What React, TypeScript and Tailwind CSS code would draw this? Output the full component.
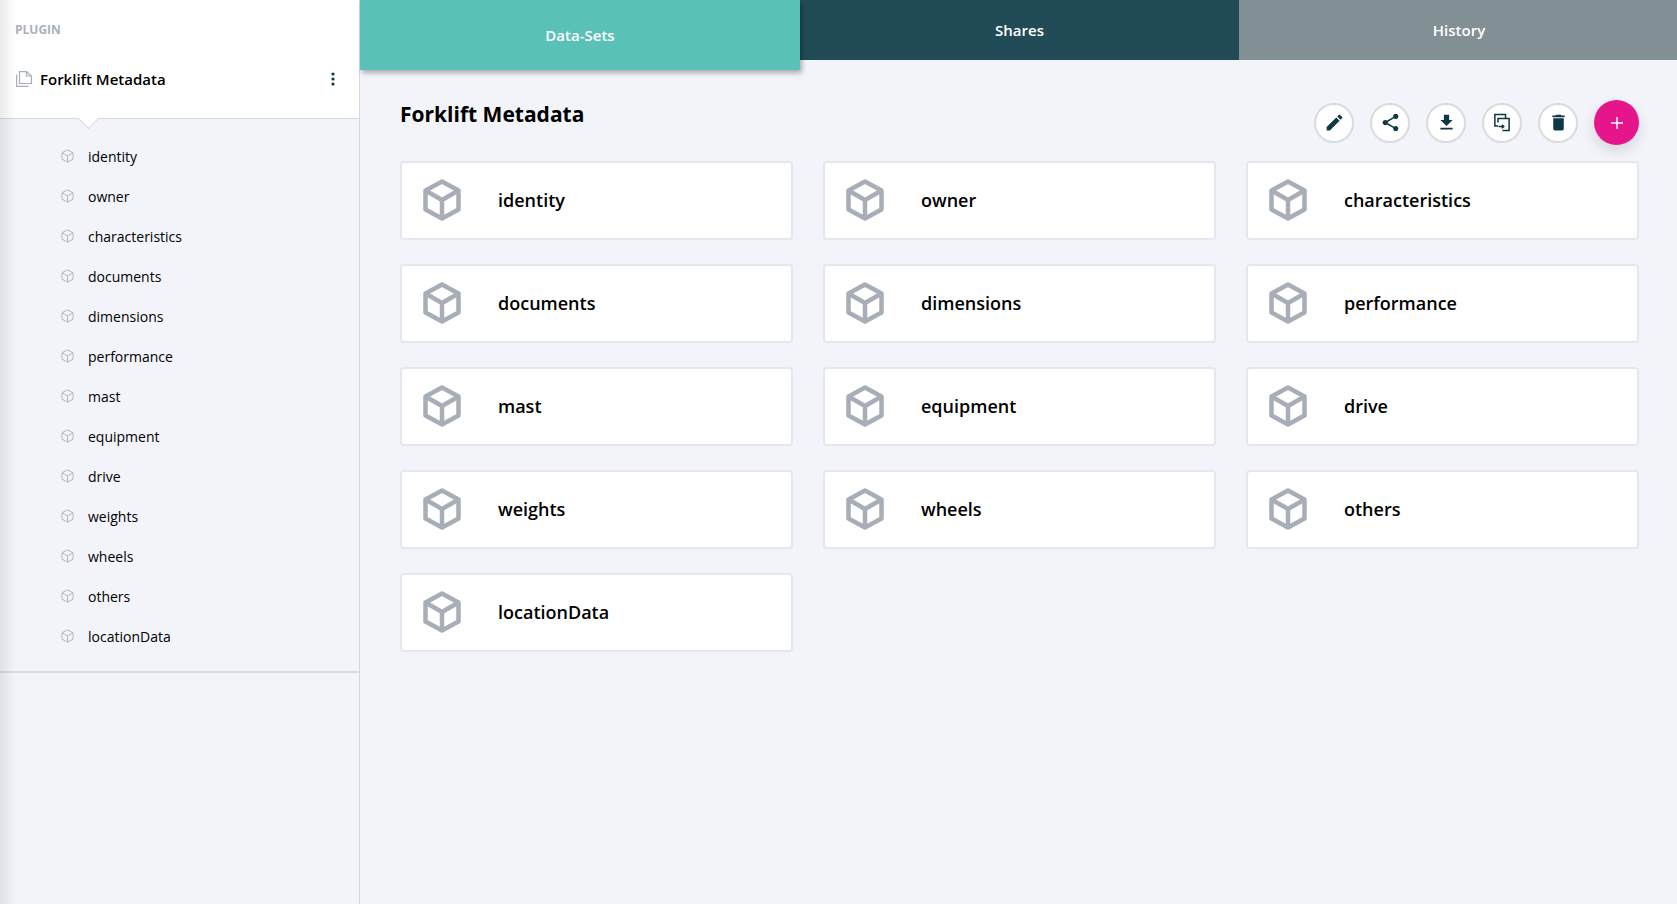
import { MdEdit, MdShare, MdFileDownload, MdDelete } from 'react-icons/md';

const DATA_SETS = [
  'identity',
  'owner',
  'characteristics',
  'documents',
  'dimensions',
  'performance',
  'mast',
  'equipment',
  'drive',
  'weights',
  'wheels',
  'others',
  'locationData',
];

function CubeIcon({ className, strokeWidth }: { className: string; strokeWidth: number }) {
  return (
    <svg viewBox="0 0 38 42" fill="none" stroke="currentColor" strokeWidth={strokeWidth} strokeLinejoin="round" className={className}>
      <path d="M19 2.5 L35.5 11.5 V30.5 L19 39.5 L2.5 30.5 V11.5 Z" />
      <path d="M2.5 11.5 L19 21 L35.5 11.5 M19 21 V39.5" />
    </svg>
  );
}

function PagesIcon() {
  return (
    <svg viewBox="0 0 16 16" fill="none" stroke="#a9b0b9" strokeWidth="1.2" className="w-4 h-4 shrink-0">
      <path d="M3.5 .6 H10.5 L15.4 5 V12.5 H3.5 Z" />
      <path d="M10.5 .6 V5 H15.4" />
      <path d="M.6 3.5 V15.4 H12.5" />
    </svg>
  );
}

function CopyIcon() {
  return (
    <svg viewBox="0 0 18 20" fill="none" stroke="#0f3844" strokeWidth="1.7" className="w-4 h-[19px]">
      <path d="M4.5 14 H1 V1 H13 V5" />
      <path d="M9.5 19 H17 V5.5 H4.5 V10" />
      <path d="M5 14.5 H11 M9 12.5 L11 14.5 L9 16.5" />
    </svg>
  );
}

function ToolButton({ children }: { children: React.ReactNode }) {
  return (
    <button className="w-10 h-10 rounded-full bg-white border-2 border-[#d8dbe0] flex items-center justify-center text-[#0f3844] text-[21px]">
      {children}
    </button>
  );
}

export default function App() {
  return (
    <div className="flex h-[904px] w-[1677px] overflow-hidden bg-[#f2f4f9] text-black font-['Open_Sans',sans-serif]">
      <aside className="relative w-[360px] shrink-0 border-r border-[#d5d8de] flex flex-col">
        <div className="h-[119px] shrink-0 bg-white border-b border-[#d5d8de] relative">
          <div className="pl-[15px] pt-[22px] text-xs font-bold text-[#aab1ba] leading-4">PLUGIN</div>
          <div className="flex items-center pl-4 pr-6 mt-[29px]">
            <PagesIcon />
            <span className="ml-[8px] text-[15px] font-semibold leading-6">Forklift Metadata</span>
            <svg viewBox="0 0 4 14" className="w-1 h-[14px] ml-auto" fill="#0f3844">
              <circle cx="2" cy="2" r="1.6" />
              <circle cx="2" cy="7" r="1.6" />
              <circle cx="2" cy="12" r="1.6" />
            </svg>
          </div>
          <div className="absolute left-[81px] top-[111px] w-[15px] h-[15px] rotate-45 bg-white border-r border-b border-[#d5d8de]" />
        </div>
        <ul className="pt-[18px] pb-[14px] border-b-2 border-[#d8dbe0]">
          {DATA_SETS.map((name) => (
            <li key={name} className="flex items-center h-10 pl-[61px]">
              <CubeIcon className="w-[13px] h-[14px] text-[#b0b6bf] -mt-[2px]" strokeWidth={3} />
              <span className="ml-[14px] text-sm leading-5">{name}</span>
            </li>
          ))}
        </ul>
        <div className="absolute inset-y-0 left-0 w-4 bg-gradient-to-r from-black/[0.08] to-transparent" />
      </aside>

      <main className="flex-1 flex flex-col min-w-0">
        <nav className="flex items-start text-white text-[15px] font-semibold">
          <div className="relative z-10 w-[440px] h-[70px] flex items-center justify-center bg-[#5ac1b9] shadow-[2px_3px_5px_rgba(0,0,0,0.3)]">
            Data-Sets
          </div>
          <div className="w-[439px] h-[60px] flex items-center justify-center bg-[#214b57]">Shares</div>
          <div className="flex-1 h-[60px] flex items-center justify-center pl-[2px] bg-[#828f95]">History</div>
        </nav>

        <div className="pl-10 pr-[38px]">
          <div className="flex items-start justify-between h-[91px]">
            <h1 className="mt-[28px] text-[21px] font-bold leading-[32px]">Forklift Metadata</h1>
            <div className="mt-[30px] flex items-center gap-4">
              <ToolButton><MdEdit /></ToolButton>
              <ToolButton><MdShare /></ToolButton>
              <ToolButton><MdFileDownload /></ToolButton>
              <ToolButton><CopyIcon /></ToolButton>
              <ToolButton><MdDelete /></ToolButton>
              <button className="w-[45px] h-[45px] rounded-full bg-[#e6158b] flex items-center justify-center shadow-[0_6px_14px_rgba(0,0,0,0.12)]">
                <svg viewBox="0 0 12 12" className="w-3 h-3" stroke="white" strokeWidth="1.5"><path d="M6 0 V12 M0 6 H12" /></svg>
              </button>
            </div>
          </div>

          <div className="grid grid-cols-3 gap-x-[30px] gap-y-[24px]">
            {DATA_SETS.map((name) => (
              <div key={name} className="h-[79px] flex items-center pl-[21px] pb-[2px] bg-white border-2 border-[#e4e7f0] rounded-[4px]">
                <CubeIcon className="w-[38px] h-[42px] text-[#a7aeb7] shrink-0" strokeWidth={4.5} />
                <span className="ml-[37px] text-lg font-semibold">{name}</span>
              </div>
            ))}
          </div>
        </div>
      </main>
    </div>
  );
}
